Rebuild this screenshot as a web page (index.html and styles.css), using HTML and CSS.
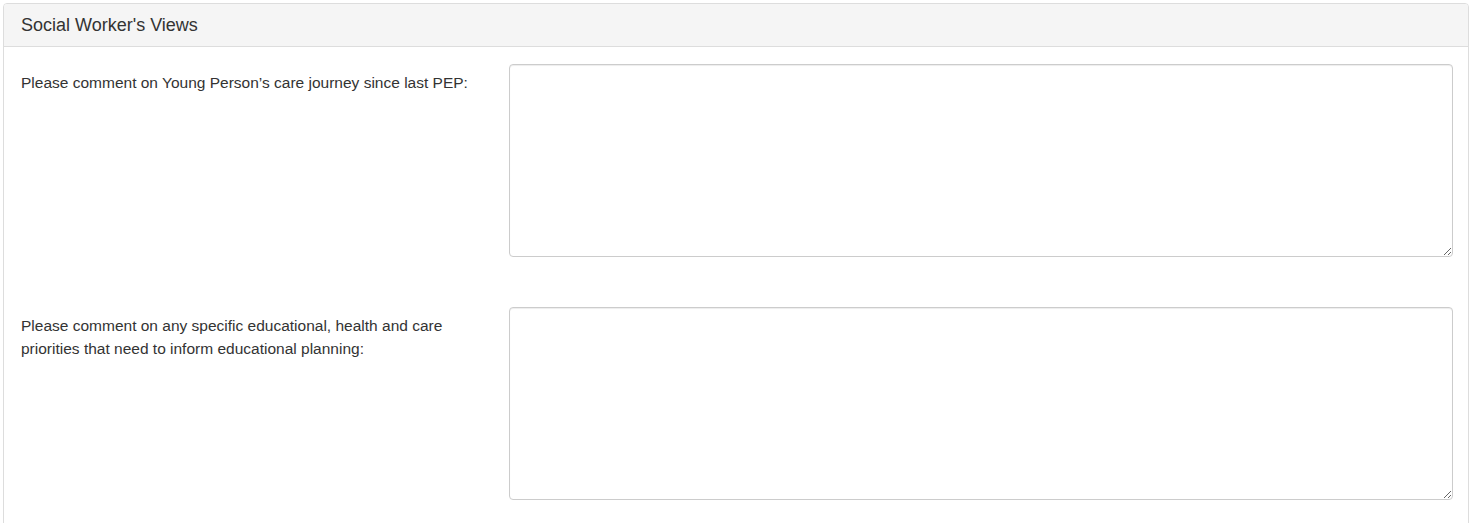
FILE: index.html
```html
<!DOCTYPE html>
<html lang="en">
<head>
    <meta charset="UTF-8">
    <title>Social Worker's Views</title>
    <link rel="stylesheet" href="styles.css">
</head>
<body>
    <div class="panel">
        <div class="panel-heading">
            <h3 class="panel-title">Social Worker's Views</h3>
        </div>
        <div class="panel-body">
            <div class="form-group">
                <label for="careJourney">Please comment on Young Person’s care journey since last PEP:</label>
                <textarea id="careJourney"></textarea>
            </div>
            <div class="form-group">
                <label for="priorities">Please comment on any specific educational, health and care priorities that need to inform educational planning:</label>
                <textarea id="priorities"></textarea>
            </div>
        </div>
    </div>
</body>
</html>
```

FILE: styles.css
```css
body {
    margin: 0;
    padding: 3px 7px 0 3px;
    font-family: "Liberation Sans", Arial, sans-serif;
    font-size: 15.5px;
    color: #333;
    background: #fff;
}
.panel {
    border: 1px solid #ddd;
    border-radius: 4px;
    background: #fff;
    min-height: 600px;
}
.panel-heading {
    background-color: #f5f5f5;
    border-bottom: 1px solid #ddd;
    border-radius: 3px 3px 0 0;
    padding: 10px 17px;
}
.panel-title {
    margin: 0;
    font-size: 18px;
    font-weight: normal;
    line-height: 22px;
    color: #333;
}
.panel-body {
    padding: 17px 15px 15px 17px;
}
.form-group {
    display: grid;
    grid-template-columns: 488px 1fr;
    margin-bottom: 50px;
}
label {
    display: block;
    padding-top: 7px;
    padding-right: 20px;
    line-height: 23px;
    font-weight: normal;
}
textarea {
    box-sizing: border-box;
    width: 100%;
    height: 193px;
    margin: 0;
    padding: 6px 12px;
    border: 1px solid #ccc;
    border-radius: 4px;
    box-shadow: inset 0 1px 1px rgba(0,0,0,0.075);
    font-family: inherit;
    font-size: 15.5px;
    resize: vertical;
}
```
